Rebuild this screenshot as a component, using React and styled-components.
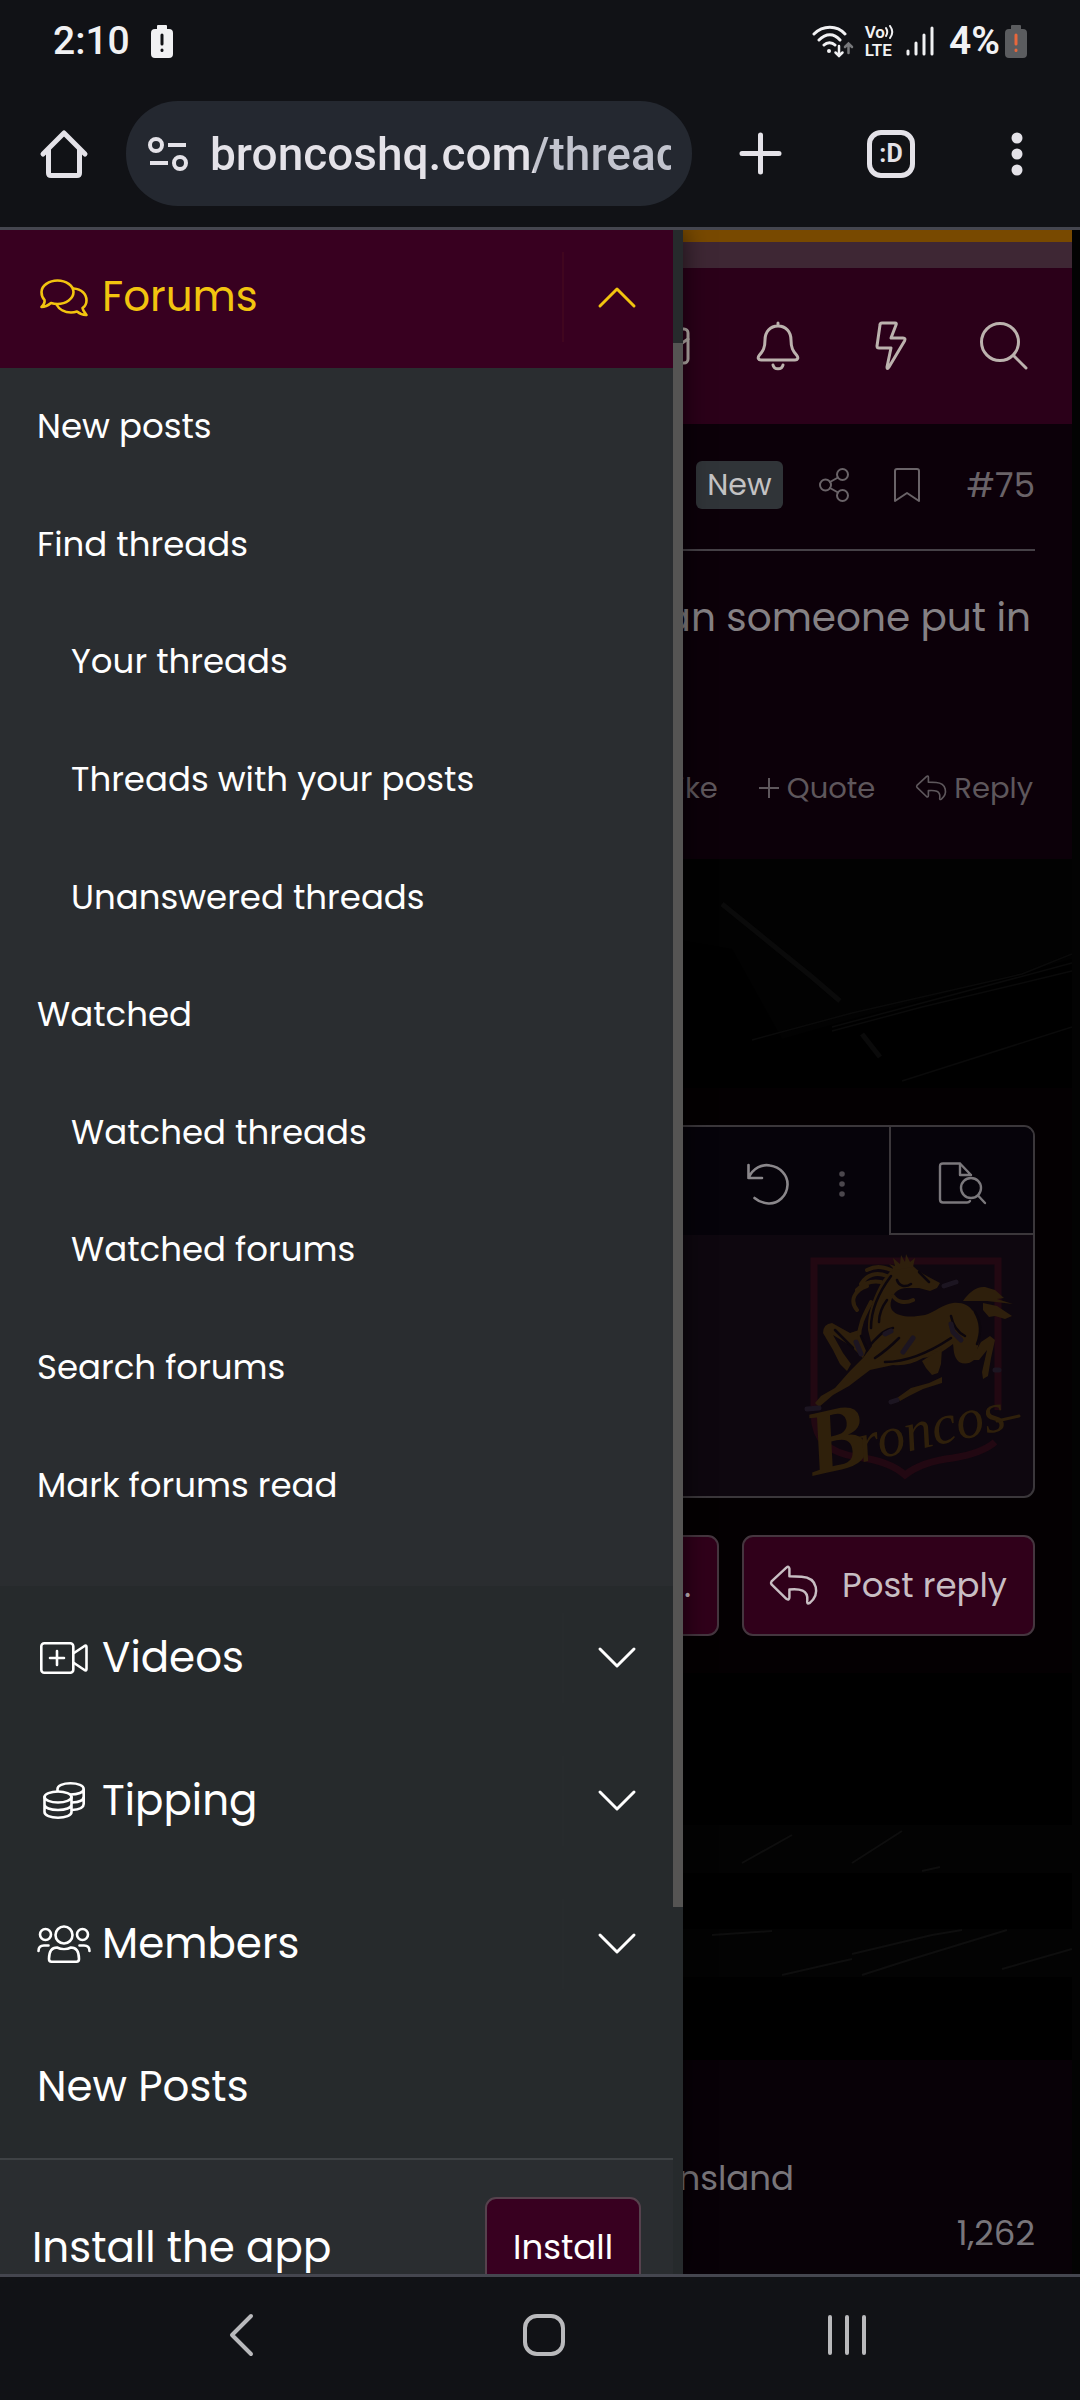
import React from "react";
import styled, { createGlobalStyle } from "styled-components";

const GlobalStyle = createGlobalStyle`
  * { box-sizing: border-box; }
  body { margin: 0; background: #111216; }
  button, input { font: inherit; color: inherit; margin: 0; padding: 0; border: 0; background: none; }
  a { color: inherit; text-decoration: none; }
  ul, p { margin: 0; padding: 0; list-style: none; }
  svg { display: block; flex: none; }
`;

/* ---------- icons ---------- */

const Glyph = ({ w, h, sw = 2, children, ...rest }) => (
  <svg
    width={w}
    height={h}
    viewBox={`0 0 ${w} ${h}`}
    fill="none"
    stroke="currentColor"
    strokeWidth={sw}
    strokeLinecap="round"
    strokeLinejoin="round"
    overflow="visible"
    aria-hidden="true"
    {...rest}
  >
    {children}
  </svg>
);

const CommentsIcon = () => (
  <Glyph w={48} h={37} sw={2.6}>
    <path d="M17.500 1.500C26 1.500 33.500 6.500 33.500 13S26 25 17.500 25C15 25 13 24.600 11 24C8 26.500 5 28 1.500 28C3.500 26 5 23.500 4.500 21C2.500 19 1.500 16 1.500 13C1.500 6.500 9 1.500 17.500 1.500Z" />
    <path d="M33.500 9.500C41.500 10 46.500 15 46.500 21.500C46.500 24 45.500 27 42.500 29C43 32 45 34 46.500 36C42.500 36.300 39.500 34.500 37 32.500C35 33.200 33 33.500 31 33.500C25 33.500 19 30.500 16.500 25.500" />
  </Glyph>
);

const VideoIcon = () => (
  <Glyph w={48} h={32} sw={2.6}>
    <rect x="1.300" y="1.300" width="32" height="29.400" rx="3" />
    <path d="M17 9V23M10 16H24M34 11L44.500 4Q46.500 3 46.500 5V27Q46.500 29 44.500 28L34 21" />
  </Glyph>
);

const CoinsIcon = () => (
  <Glyph w={42} h={37} sw={2.6}>
    <ellipse cx="15" cy="15" rx="13.500" ry="5.500" />
    <path d="M1.500 15V30C1.500 33.500 7.500 35.700 15 35.700S28.500 33.500 28.500 30V15M1.500 22.500C1.500 26 7.500 28 15 28S28.500 26 28.500 22.500" />
    <path d="M14.500 9V7C14.500 3.500 20 1.300 27.500 1.300S40.700 3.500 40.700 7S35 12.500 27.500 12.500M40.700 7V22C40.700 25.500 36 27.500 29 28M40.700 14.500C40.700 18 36 20.300 29 20.500" />
  </Glyph>
);

const MembersIcon = () => (
  <Glyph w={54} h={38} sw={2.6}>
    <circle cx="27" cy="10" r="8.500" />
    <circle cx="8.500" cy="9.500" r="5.500" />
    <circle cx="45.500" cy="9.500" r="5.500" />
    <path d="M12 34C12 26 15.500 22.500 20 22.500C24 24.500 30 24.500 34 22.500C38.500 22.500 42 26 42 34Q42 36.700 39.500 36.700H14.500Q12 36.700 12 34ZM1.500 26C1.500 22 4 20.500 7 20.500H11.500M52.500 26C52.500 22 50 20.500 47 20.500H42.500" />
  </Glyph>
);

const ChevronIcon = ({ up }) => (
  <Glyph w={38} h={20} sw={3}>
    <path d={up ? "M2 19L19 2L36 19" : "M2 1L19 18L36 1"} />
  </Glyph>
);

const MailIcon = () => (
  <Glyph w={48} h={37} sw={3}>
    <rect x="1" y="1" width="46" height="34" rx="4" />
    <path d="M1 11L20 24Q24 27 28 24L47 11" />
  </Glyph>
);

const BellIcon = () => (
  <Glyph w={42} h={48} sw={3}>
    <path d="M21 1V4M21 4C13 4 8 10 8 18C8 26 6 29 2.500 33C0 36 1.500 38 4 38H38C40.500 38 42 36 39.500 33C36 29 34 26 34 18C34 10 29 4 21 4ZM16 43C17 48 25 48 26 43" />
  </Glyph>
);

const BoltIcon = () => (
  <Glyph w={30} h={48} sw={3}>
    <path d="M6 1H19Q21 1 20 3L15 16H27Q30 16 28.500 19L13 45Q11 48 11 45L15 26H3Q1 26 1 24L4 3Q4 1 6 1Z" />
  </Glyph>
);

const SearchIcon = () => (
  <Glyph w={48} h={48} sw={3}>
    <circle cx="20" cy="20" r="18.500" />
    <path d="M33.500 33.500L46 46" />
  </Glyph>
);

const ShareIcon = () => (
  <Glyph w={30} h={34}>
    <circle cx="6.500" cy="17" r="5.500" />
    <circle cx="23.500" cy="6.500" r="5.500" />
    <circle cx="23.500" cy="27.500" r="5.500" />
    <path d="M11 14L19 9.500M11 20L19 24.500" />
  </Glyph>
);

const BookmarkIcon = () => (
  <Glyph w={26} h={34}>
    <path d="M1 33V3Q1 1 3 1H23Q25 1 25 3V33L13 25Z" />
  </Glyph>
);

const PlusIcon = () => (
  <Glyph w={20} h={20} strokeLinecap="butt">
    <path d="M10 0V20M0 10H20" />
  </Glyph>
);

const ReplyIcon = ({ w, h, sw }) => (
  <Glyph w={w} h={h} sw={sw} viewBox="0 0 46 39">
    <path d="M1.500 15.500Q0.500 17 1.500 18.500L16 32.500Q19 34.500 19 31V23.500C29 22.500 37.500 24 36.500 34Q35.500 38.500 39 36.500C49 28 47 12 31 11L19 10.500V3Q18.500 0 16 2Z" />
  </Glyph>
);

const UndoIcon = () => (
  <Glyph w={42} h={41} sw={2.6}>
    <path d="M1.500 1V14H15M1.500 14C6 4 15 0 23 1.500C33 3 41 11 40.500 21C40 32 31 40 21.500 39.500C15.500 39 11 37 7.500 34" />
  </Glyph>
);

const DotsIcon = () => (
  <Glyph w={6} h={26}>
    <g fill="currentColor" stroke="none">
      <circle cx="3" cy="3" r="2.800" />
      <circle cx="3" cy="13" r="2.800" />
      <circle cx="3" cy="23" r="2.800" />
    </g>
  </Glyph>
);

const PreviewIcon = () => (
  <Glyph w={47} h={42} sw={2.4}>
    <path d="M32 13L21 1.500H4Q1 1.500 1 4.500V37.500Q1 40.500 4 40.500H28Q30 40.500 31 39M21 1.500V13H32" />
    <circle cx="32" cy="26" r="10" />
    <path d="M39 33.500L46 41" />
  </Glyph>
);

const HomeIcon = () => (
  <Glyph w={48} h={48} sw={5}>
    <path d="M3 24L24 3L45 24M8.500 19V43Q8.500 45.500 11 45.500H37Q39.500 45.500 39.500 43V19" />
  </Glyph>
);

const TuneIcon = () => (
  <Glyph w={40} h={34} sw={4} strokeLinecap="butt">
    <circle cx="8" cy="8" r="6" />
    <circle cx="32" cy="26" r="6" />
    <path d="M20 8H38M2 26H20" />
  </Glyph>
);

const AddIcon = () => (
  <Glyph w={43} h={43} sw={5}>
    <path d="M21.500 3V40M3 21.500H40" />
  </Glyph>
);

const MoreIcon = () => (
  <Glyph w={12} h={44}>
    <g fill="currentColor" stroke="none">
      <circle cx="6" cy="6" r="5.500" />
      <circle cx="6" cy="22" r="5.500" />
      <circle cx="6" cy="38" r="5.500" />
    </g>
  </Glyph>
);

const BatteryAlertIcon = ({ body, mark }) => (
  <svg width="22" height="33" viewBox="0 0 22 33" aria-hidden="true">
    <path fill={body} d="M7 0H15Q16 0 16 1V4H18Q22 4 22 8V29Q22 33 18 33H4Q0 33 0 29V8Q0 4 4 4H6V1Q6 0 7 0Z" />
    <path stroke={mark} strokeWidth="3" strokeLinecap="round" d="M11 10V19M11 25V25.500" />
  </svg>
);

const WifiIcon = () => (
  <svg width="42" height="33" viewBox="0 0 42 33" fill="none" strokeWidth="3" strokeLinecap="round" stroke="#f1f1f3" aria-hidden="true">
    <path d="M2 9C11 0 25 0 33 9M7 15C14 8 22 8 28 15M12 20C15 17 20 17 23 20" />
    <circle cx="17" cy="26" r="2" fill="#f1f1f3" stroke="none" />
    <path strokeWidth="2.500" d="M27 21V31M23.500 27.500L27 31L30.500 27.500" />
    <path strokeWidth="2.500" stroke="#77787b" d="M36.500 28V19M33 22L36.500 18.500L40 22" />
  </svg>
);

const SignalIcon = () => (
  <svg width="28" height="30" viewBox="0 0 28 30" stroke="#f1f1f3" strokeWidth="3" strokeLinecap="round" aria-hidden="true">
    <path d="M2 25V28M10 17V28M18 9V28M26 2V28" />
  </svg>
);

const VoWaves = () => (
  <svg width="10" height="14" viewBox="0 0 10 14" fill="none" stroke="#f1f1f3" strokeWidth="2" strokeLinecap="round" aria-hidden="true">
    <path d="M1 3Q3.500 7 1 11M5 1Q9.500 7 5 13" />
  </svg>
);

const BackIcon = () => (
  <Glyph w={24} h={42} sw={4}>
    <path d="M22 2L3 21L22 40" />
  </Glyph>
);

const HomeKeyIcon = () => (
  <Glyph w={42} h={42} sw={4}>
    <rect x="2" y="2" width="38" height="38" rx="12" />
  </Glyph>
);

const RecentsIcon = () => (
  <Glyph w={38} h={40} sw={4}>
    <path d="M2 2V38M19 2V38M36 2V38" />
  </Glyph>
);

const BroncosLogo = () => (
  <svg width="224" height="240" viewBox="0 0 224 240" role="img" aria-label="Broncos">
    <path fill="none" stroke="#220812" strokeWidth="7" d="M13 160V15H197V164M13 168C14 194 26 206 56 211C80 214 94 220 104 229C118 218 134 214 152 212C170 209 184 205 194 196" />
    <g fill="#2e1f0c">
      <path d="M92 22C98 16 106 16 112 20C120 28 130 32 139 37L136 42L129 45L118 42L106 42C98 42 94 46 92 50C88 58 88 66 99 69C108 72 116 70 124 69C134 66 142 58 152 57C162 56 168 60 171 64C178 70 180 78 179 88C178 98 176 106 173 114Q166 120 158 116C152 110 153 104 152 98C142 106 134 110 122 112C112 118 102 120 92 119L69 124L48 140L32 149L18 161L14 157L20 150L34 142L49 125L62 112L71 100L67 84C66 70 72 50 82 34Z" />
      <path d="M49 87L31 77Q22 78 22 87L32 104L39 118L46 125L50 118L42 107L32 89L50 100L62 112L66 102L58 84Z" />
      <path d="M121 115L141 102L140 118L137 127L131 129L125 122ZM141 131V137L122 143L108 150L99 155L96 152L110 142L128 137Z" />
      <path d="M170 114L180 96L189 90L194 94L190 112L187 130L182 133L181 126L186 104L178 114Z" />
      <path d="M162 55C168 46 176 40 184 41L194 44L203 52L196 53L212 58L186 55ZM182 57L196 60L205 66L211 70L204 73L194 70L188 71L182 64Z" />
      <path d="M94 24L88 18L94 20L92 12L99 18L100 9L104 16L105 8L109 16L114 12L112 21Z" />
    </g>
    <g fill="none" stroke="#2e1f0c" strokeWidth="4" strokeLinecap="round">
      <path d="M90 24C80 20 74 20 66 24M86 30C76 26 66 28 60 38M80 36C70 34 62 38 56 44M66 40C54 44 48 54 56 64M92 50C96 56 104 58 112 54M70 56C64 68 58 78 58 92" />
    </g>
    <g fill="none" stroke="#0c060d" strokeWidth="2.500" strokeLinecap="round">
      <path d="M90 30C78 46 70 62 70 82M86 54C80 62 78 70 78 76M70 98C78 90 82 84 92 82M74 112C86 104 92 98 98 92M84 116C104 116 126 108 150 92M150 70C152 80 156 86 164 90M174 66C180 76 180 88 176 98M96 34C98 40 104 42 110 38M118 26L128 36M60 90L66 104M34 84L52 102" />
    </g>
    <g fill="none" stroke="#1c1521" strokeWidth="5" strokeLinecap="round">
      <path d="M102 106L112 92M150 78L152 86L160 94M84 88L90 85M55 96L60 108M6 163L18 162M90 156L96 154M143 40L155 36M194 124H198" />
    </g>
    <g transform="rotate(-13 20 228)" fill="#2f200b" fontFamily="'Liberation Serif', serif" fontStyle="italic">
      <text x="12" y="228" fontSize="92" fontWeight="700">B</text>
      <text x="62" y="226" fontSize="56">roncos</text>
    </g>
    <path stroke="#2f200b" strokeWidth="3" strokeLinecap="round" d="M196 175L218 170" />
  </svg>
);

const Scratches = styled.svg.attrs({ "aria-hidden": true, preserveAspectRatio: "xMaxYMin meet" })`
  width: 100%;
  height: ${(p) => p.$h}px;
  overflow: hidden;
`;

/* ---------- shell ---------- */

const Screen = styled.div`
  height: 100vh;
  display: flex;
  flex-direction: column;
  overflow: hidden;
  background: #111216;
  color: #fff;
  font-family: Poppins, Inter, "Noto Sans", sans-serif;
`;

const StatusBar = styled.header`
  display: flex;
  justify-content: space-between;
  align-items: center;
  height: 82px;
  padding: 0 53px;
  font: 500 39px/40px Roboto, sans-serif;
  color: #f1f1f3;
`;

const StatusGroup = styled.div`
  display: flex;
  align-items: center;
  gap: ${(p) => p.$gap}px;
`;

const VoLte = styled.div`
  display: flex;
  flex-direction: column;
  font: 600 17px/18px Roboto, sans-serif;
`;

const VoLine = styled.span`
  display: flex;
  align-items: center;
`;

const Charge = styled.span`
  display: flex;
  align-items: center;
  gap: 5px;
  font-weight: 600;
  margin-left: 4px;
`;

const BrowserBar = styled.div`
  display: flex;
  align-items: center;
  height: 148px;
  padding: 0 46px 2px 40px;
  border-bottom: 3px solid #45464f;
  color: #e4e2e8;
`;

const BarButton = styled.button`
  display: grid;
  place-items: center;
  min-width: ${(p) => p.$w}px;
  height: 48px;
`;

const AddressBox = styled.label`
  flex: 1;
  min-width: 0;
  display: flex;
  align-items: center;
  gap: 22px;
  height: 105px;
  margin: 0 47px 0 38px;
  padding: 0 21px 0 22px;
  border-radius: 52px;
  background: #242830;
`;

const Address = styled.input`
  flex: 1;
  min-width: 0;
  height: 60px;
  font: 500 46px/60px Roboto, sans-serif;
  background: linear-gradient(90deg, #e4e2e8 324px, #c2c4ce 324px);
  background-clip: text;
  color: transparent;
  outline: 0;
`;

const TabCount = styled.span`
  display: grid;
  place-items: center;
  width: 48px;
  height: 48px;
  border: 5px solid currentColor;
  border-radius: 14px;
  font: 700 25px/30px Roboto, sans-serif;
`;

const BarActions = styled.div`
  display: flex;
  align-items: center;
  gap: 85px;
`;

const Viewport = styled.div`
  flex: 1;
  min-height: 0;
  position: relative;
  overflow: hidden;
  background: #030303;
`;

const SystemKeys = styled.nav`
  display: flex;
  align-items: center;
  height: 126px;
  padding: 0 82px 8px 90px;
  border-top: 3px solid #45464f;
  color: #b9b9bc;
`;

const SystemKey = styled.button`
  flex: 1;
  display: grid;
  place-items: center;
  height: 100px;
`;

/* ---------- page behind the drawer ---------- */

const Page = styled.main`
  margin-right: 8px;
  background: #000;
`;

const Stripe = styled.div`
  height: ${(p) => p.$h}px;
  background: ${(p) => p.$color};
`;

const SiteNav = styled.nav`
  display: flex;
  justify-content: flex-end;
  align-items: center;
  height: 156px;
  padding: 0 44px;
  background: #2b0019;
  color: #bcb2ae;
`;

const NavButton = styled.button`
  display: grid;
  place-items: center;
  width: 48px;
  height: 60px;
  margin-left: 65px;
`;

const Post = styled.article`
  padding: 0 37px;
  height: 435px;
  background: #0c0009;
`;

const PostHead = styled.div`
  display: flex;
  justify-content: flex-end;
  align-items: center;
  height: 127px;
  padding-bottom: 4px;
  border-bottom: 2px solid #464147;
  color: #6a6368;
  font-size: 34px;
`;

const Badge = styled.span`
  margin-right: 36px;
  padding: 0 11px;
  border-radius: 6px;
  background: #303438;
  color: #c3c2c3;
  font-size: 30px;
  line-height: 48px;
`;

const HeadLink = styled.a`
  margin-left: ${(p) => p.$ml || 0}px;
  line-height: 40px;
`;

const PostText = styled.p`
  padding: 37px 4px 79px 0;
  text-align: right;
  font-size: 39px;
  line-height: 60px;
  color: #858184;
`;

const PostActions = styled.div`
  display: flex;
  justify-content: flex-end;
  align-items: center;
  gap: 41px;
  padding: 41px 2px 0 0;
  font-size: 29px;
  line-height: 40px;
  color: #5e575c;
`;

const PostAction = styled.a`
  display: flex;
  align-items: center;
  gap: 8px;
`;

const ReplyArea = styled.form`
  display: flex;
  flex-direction: column;
  gap: 37px;
  padding: 37px;
  background: #040002;
`;

const Editor = styled.div`
  border: 2px solid #3b373b;
  border-radius: 11px;
  overflow: hidden;
  background: #0e070f;
`;

const Toolbar = styled.div`
  display: flex;
  justify-content: flex-end;
  height: 108px;
  padding-left: 11px;
  background: #06030a;
`;

const Tool = styled.button.attrs({ type: "button" })`
  display: grid;
  place-items: center;
  width: ${(p) => p.$w}px;
  padding-top: 6px;
  color: ${(p) => p.$color};
  border: 0 solid #3b373b;
  border-width: ${(p) => (p.$boxed ? "0 0 2px 2px" : "0")};
  margin-left: ${(p) => (p.$boxed ? 12 : 0)}px;
`;

const EditorBody = styled.div`
  display: flex;
  justify-content: flex-end;
  align-items: center;
  height: 261px;
  padding-right: 8px;
`;

const FormButtons = styled.div`
  display: flex;
  justify-content: flex-end;
  gap: 23px;
`;

const Button = styled.button.attrs({ type: "button" })`
  display: flex;
  align-items: center;
  gap: 25px;
  height: ${(p) => p.$h}px;
  padding: 0 26px;
  border: 2px solid ${(p) => (p.$dim ? "#45363f" : "#56424d")};
  border-radius: 11px;
  background: ${(p) => (p.$dim ? "#30001a" : "#380020")};
  color: ${(p) => (p.$dim ? "#c8bec3" : "#fff")};
  font-size: 34px;
`;

const Footer = styled.footer`
  height: 220px;
  padding: 91px 37px 0;
  background: #080107;
  color: #78757a;
  font-size: 34px;
  line-height: 55px;
`;

const FooterPlace = styled.p`
  width: 757px;
  text-align: right;
`;

const FooterCount = styled.p`
  text-align: right;
`;

/* ---------- drawer ---------- */

const Drawer = styled.aside`
  position: absolute;
  inset: 0 auto 0 0;
  width: 683px;
  padding-right: 10px;
  overflow: hidden;
  background: #262a2c;
  box-shadow: 0 0 24px rgba(0, 0, 0, 0.6);
`;

const ScrollThumb = styled.div`
  position: absolute;
  top: 113px;
  right: 0;
  width: 10px;
  height: 1564px;
  background: #555453;
`;

const Section = styled.div`
  display: flex;
  align-items: center;
  height: ${(p) => (p.$active ? 138 : 143)}px;
  padding-bottom: ${(p) => (p.$active ? 4 : 0)}px;
  background: ${(p) => (p.$active ? "#380020" : "transparent")};
  color: ${(p) => (p.$active ? "#f2c40f" : "#fff")};
`;

const SectionLink = styled.a`
  flex: 1;
  display: flex;
  align-items: center;
  gap: 11px;
  padding-left: 37px;
  font-size: 42px;
  line-height: 60px;
`;

const IconSlot = styled.span`
  display: grid;
  place-items: center;
  width: 54px;
`;

const Toggle = styled.button`
  display: grid;
  place-items: center;
  width: 111px;
  height: 90px;
  padding-right: 3px;
  border-left: 2px solid ${(p) => (p.$active ? "#40061f" : "#272b2d")};
`;

const SubMenu = styled.ul`
  display: grid;
  grid-auto-rows: 1fr;
  min-height: 1218px;
  padding-bottom: 42px;
  background: #2a2d30;
`;

const SubItem = styled.li`
  display: flex;
  align-items: center;
  padding-left: ${(p) => (p.$child ? 71 : 37)}px;
  font-size: 34px;
`;

const InstallBar = styled.div`
  display: flex;
  justify-content: space-between;
  align-items: center;
  padding: 37px 32px;
  border-top: 2px solid #3e4245;
  background: #2a2d30;
  font-size: 42px;
`;

const forumLinks = [
  ["New posts"],
  ["Find threads"],
  ["Your threads", true],
  ["Threads with your posts", true],
  ["Unanswered threads", true],
  ["Watched"],
  ["Watched threads", true],
  ["Watched forums", true],
  ["Search forums"],
  ["Mark forums read"],
];

const sections = [
  ["Videos", VideoIcon],
  ["Tipping", CoinsIcon],
  ["Members", MembersIcon],
];

export default function App() {
  return (
    <Screen>
      <GlobalStyle />
      <StatusBar>
        <StatusGroup $gap={21}>
          <span>2:10</span>
          <BatteryAlertIcon body="#f1f1f3" mark="#111216" />
        </StatusGroup>
        <StatusGroup $gap={11}>
          <WifiIcon />
          <VoLte>
            <VoLine>Vo<VoWaves /></VoLine>
            <span>LTE</span>
          </VoLte>
          <SignalIcon />
          <Charge>
            4%
            <BatteryAlertIcon body="#5b5c5f" mark="#e8673c" />
          </Charge>
        </StatusGroup>
      </StatusBar>

      <BrowserBar>
        <BarButton $w={48} aria-label="Home"><HomeIcon /></BarButton>
        <AddressBox>
          <TuneIcon />
          <Address aria-label="Address" readOnly value="broncoshq.com/threads" />
        </AddressBox>
        <BarActions>
          <BarButton $w={43} aria-label="New tab"><AddIcon /></BarButton>
          <BarButton $w={48} aria-label="Tabs"><TabCount>:D</TabCount></BarButton>
          <BarButton $w={34} aria-label="More"><MoreIcon /></BarButton>
        </BarActions>
      </BrowserBar>

      <Viewport>
        <Page>
          <Stripe $h={12} $color="#784900" />
          <Stripe $h={26} $color="#3e2734" />
          <SiteNav>
            <NavButton aria-label="Inbox"><MailIcon /></NavButton>
            <NavButton aria-label="Alerts"><BellIcon /></NavButton>
            <NavButton aria-label="What's new"><BoltIcon /></NavButton>
            <NavButton aria-label="Search"><SearchIcon /></NavButton>
          </SiteNav>

          <Post>
            <PostHead>
              <Badge>New</Badge>
              <HeadLink href="#share" aria-label="Share"><ShareIcon /></HeadLink>
              <HeadLink href="#bookmark" aria-label="Bookmark" $ml={45}><BookmarkIcon /></HeadLink>
              <HeadLink href="#post-75" $ml={47}>#75</HeadLink>
            </PostHead>
            <PostText>Can someone put in</PostText>
            <PostActions>
              <PostAction href="#like">Like</PostAction>
              <PostAction href="#quote"><PlusIcon />Quote</PostAction>
              <PostAction href="#reply"><ReplyIcon w={30} h={26} sw={2.5} />Reply</PostAction>
            </PostActions>
          </Post>

          <Scratches $h={229} viewBox="0 0 400 229" fill="none" stroke="#0a0a0a">
            <path fill="#020202" stroke="none" d="M0 0H400V100L180 160L110 180L60 90L0 80Z" />
            <path strokeWidth="5" d="M50 45L140 118L168 142M190 175L208 198" />
            <path strokeWidth="1.500" d="M80 181L180 154L350 115L400 95M160 172L250 148L400 112M160 168L400 104M230 222L400 168" />
          </Scratches>

          <ReplyArea>
            <Editor>
              <Toolbar>
                <Tool $w={78} $color="#8a878b" aria-label="Undo"><UndoIcon /></Tool>
                <Tool $w={70} $color="#4b474d" aria-label="More options"><DotsIcon /></Tool>
                <Tool $w={144} $color="#7b787c" $boxed aria-label="Preview"><PreviewIcon /></Tool>
              </Toolbar>
              <EditorBody><BroncosLogo /></EditorBody>
            </Editor>
            <FormButtons>
              <Button $dim $h={101}>Attach files...</Button>
              <Button $dim $h={101}><ReplyIcon w={47} h={41} sw={2.4} />Post reply</Button>
            </FormButtons>
          </ReplyArea>

          <Scratches $h={387} viewBox="0 0 400 387" fill="none" stroke="#0e0e0e">
            <path fill="#030303" stroke="none" d="M0 152H400V200H0ZM0 256H400V304H0Z" />
            <path strokeWidth="2" d="M180 281L260 262L290 257M190 302L240 286L335 257M40 262L100 258M110 302L180 286M330 296L400 276M250 198L268 194M70 190L120 162M180 190L230 158" />
          </Scratches>

          <Footer>
            <FooterPlace>Queensland</FooterPlace>
            <FooterCount>1,262</FooterCount>
          </Footer>
        </Page>

        <Drawer>
          <Section $active>
            <SectionLink href="#forums"><IconSlot><CommentsIcon /></IconSlot>Forums</SectionLink>
            <Toggle $active aria-label="Collapse Forums"><ChevronIcon up /></Toggle>
          </Section>
          <SubMenu>
            {forumLinks.map(([label, child]) => (
              <SubItem key={label} $child={child}><a href="#forums">{label}</a></SubItem>
            ))}
          </SubMenu>
          {sections.map(([label, Icon]) => (
            <Section key={label}>
              <SectionLink href="#section"><IconSlot><Icon /></IconSlot>{label}</SectionLink>
              <Toggle aria-label={`Expand ${label}`}><ChevronIcon /></Toggle>
            </Section>
          ))}
          <Section>
            <SectionLink href="#new-posts">New Posts</SectionLink>
          </Section>
          <InstallBar>
            Install the app
            <Button $h={101}>Install</Button>
          </InstallBar>
          <ScrollThumb />
        </Drawer>
      </Viewport>

      <SystemKeys>
        <SystemKey aria-label="Back"><BackIcon /></SystemKey>
        <SystemKey aria-label="Home screen"><HomeKeyIcon /></SystemKey>
        <SystemKey aria-label="Recent apps"><RecentsIcon /></SystemKey>
      </SystemKeys>
    </Screen>
  );
}
